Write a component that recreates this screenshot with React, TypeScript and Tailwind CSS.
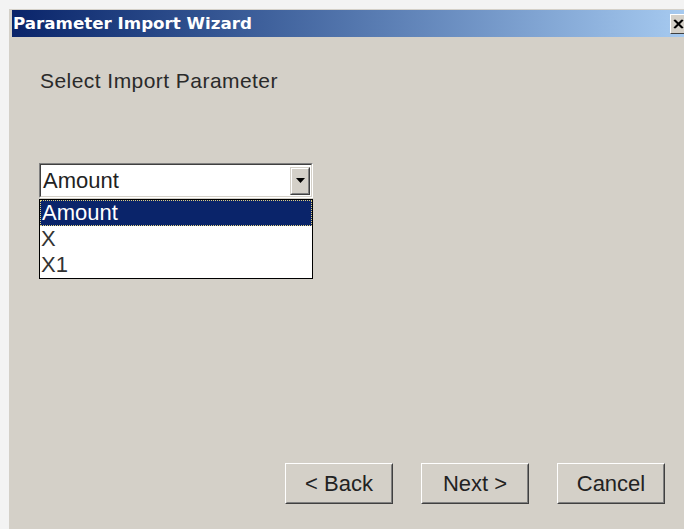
import React from "react";

const sans = { fontFamily: '"Liberation Sans", Arial, sans-serif' };

function WinButton({ label }: { label: string }) {
  return (
    <div className="w-[108px] h-[41px] border border-t-white border-l-white border-r-[#404040] border-b-[#404040] bg-[#d4d0c8]">
      <div className="w-full h-full border border-transparent border-r-[#808080] border-b-[#808080] flex items-center justify-center text-[22px] text-[#222] leading-none">
        {label}
      </div>
    </div>
  );
}

export default function App() {
  return (
    <div className="w-[684px] h-[529px] bg-[#f3f3f3] pt-[9px] pl-[9px] overflow-hidden" style={sans}>
      <div className="w-full h-full bg-[#d4d0c8] border-l border-t border-l-[#d4d0c8] border-t-[#d4d0c8] pl-[1px] flex flex-col">
        {/* title bar */}
        <div className="h-[27px] ml-[1px] flex items-center justify-between bg-gradient-to-r from-[#0a246a] to-[#a6caf0]">
          <span
            className="pl-[1px] text-white text-[16.7px] font-bold"
            style={{ fontFamily: '"DejaVu Sans", Verdana, sans-serif' }}
          >
            Parameter Import Wizard
          </span>
          <div className="w-[16px] h-[20px] mr-[-2px] bg-[#d4d0c8] border border-t-white border-l-white border-r-[#404040] border-b-[#404040] flex items-center justify-center">
            <svg width="11" height="10" viewBox="0 0 11 10">
              <path d="M1 1 L9 9 M9 1 L1 9 M2 1 L10 9 M10 1 L2 9" stroke="#000" strokeWidth="1.4" />
            </svg>
          </div>
        </div>

        {/* body */}
        <div className="flex-1 flex flex-col pl-[28px]">
          <div className="mt-[32px] pl-[1px] text-[21px] tracking-[0.45px] text-[#2a2a2a] leading-[24px]">Select Import Parameter</div>

          <div className="mt-[70px] w-[274px]">
            {/* combo box */}
            <div className="h-[35px] border border-t-[#808080] border-l-[#808080] border-r-white border-b-white">
              <div className="h-full border border-t-[#404040] border-l-[#404040] border-r-[#d4d0c8] border-b-[#d4d0c8] bg-white flex items-center justify-between">
                <span className="pl-[2px] text-[22px] text-[#222] leading-none">Amount</span>
                <div className="w-[20px] h-[28px] mr-[1px] bg-[#d4d0c8] border border-t-[#d4d0c8] border-l-[#d4d0c8] border-r-[#404040] border-b-[#404040]">
                  <div className="w-full h-full border border-t-white border-l-white border-r-[#808080] border-b-[#808080] flex items-center justify-center">
                    <svg width="9" height="5" viewBox="0 0 9 5">
                      <path d="M0 0 H9 L4.5 5 Z" fill="#000" />
                    </svg>
                  </div>
                </div>
              </div>
            </div>

            {/* open list */}
            <div className="mt-[1px] border border-black bg-white">
              <div className="h-[26px] bg-[#0a246a] text-white text-[22px] leading-[26px] pl-[2px] outline-1 outline-dotted outline-[#e0d080] outline-offset-[-1px]">
                Amount
              </div>
              <div className="h-[26px] text-[22px] leading-[26px] text-[#333] pl-[1px]">X</div>
              <div className="h-[26px] text-[22px] leading-[26px] text-[#333] pl-[1px]">X1</div>
            </div>
          </div>

          <div className="flex-1" />

          <div className="flex gap-[28px] pl-[246px] mb-[25px]">
            <WinButton label="< Back" />
            <WinButton label="Next >" />
            <WinButton label="Cancel" />
          </div>
        </div>
      </div>
    </div>
  );
}
